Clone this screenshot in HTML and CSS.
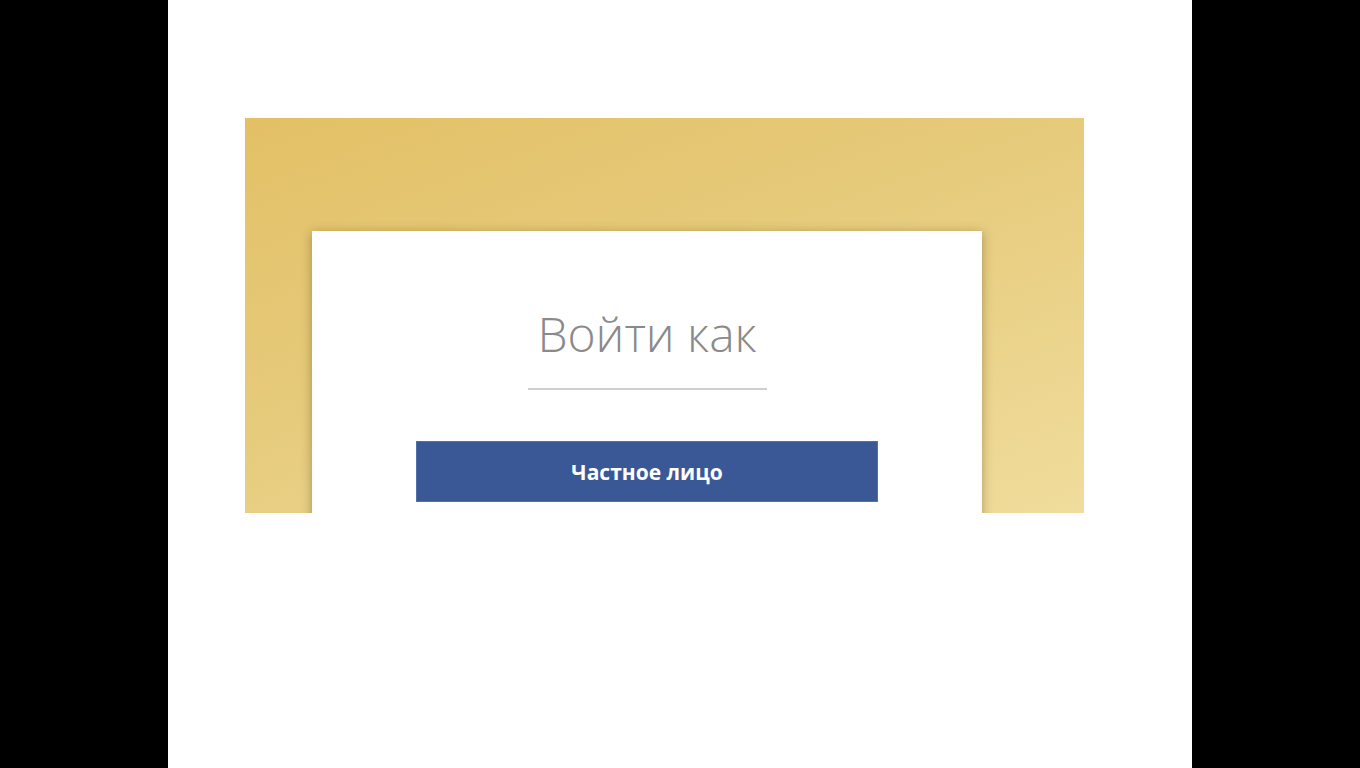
FILE: index.html
```html
<!DOCTYPE html>
<html lang="ru">
<head>
    <meta charset="UTF-8">
    <meta name="viewport" content="width=device-width, initial-scale=1.0">
    <title>Войти как</title>
    <link rel="stylesheet" href="styles.css">
</head>
<body>

    <div class="screen">
        <div class="banner">
            <div class="card">
                <h2 class="title">Войти как</h2>
                <div class="divider"></div>
                <button class="btn-login">Частное лицо</button>
            </div>
        </div>
    </div>

</body>
</html>
```

FILE: styles.css
```css
body {
    margin: 0;
    background: #000;
    font-family: "Open Sans", "Noto Sans", sans-serif;
}
.screen {
    width: 1024px;
    height: 768px;
    margin: 0 auto;
    background: #fff;
    padding-top: 118px;
    box-sizing: border-box;
}
.banner {
    width: 839px;
    height: 395px;
    margin-left: 77px;
    padding-top: 113px;
    box-sizing: border-box;
    overflow: hidden;
    background: linear-gradient(160deg, #e3c066 0%, #e6cb7c 45%, #f0dc9c 100%);
}
.card {
    width: 670px;
    height: 400px;
    margin-left: 67px;
    background: #fff;
    box-shadow: 0 2px 10px rgba(90, 70, 20, 0.45);
    padding-top: 79px;
    box-sizing: border-box;
    display: flex;
    flex-direction: column;
    align-items: center;
}
.title {
    margin: 0;
    font-size: 48px;
    font-weight: 300;
    color: #8a8a8a;
    line-height: 1;
}
.divider {
    width: 239px;
    height: 2px;
    background: #cfcfcf;
    margin-top: 30px;
}
.btn-login {
    width: 462px;
    height: 61px;
    margin-top: 51px;
    background: #3b5896;
    border: 1px solid #5470aa;
    color: #fff;
    font-family: "Open Sans", sans-serif;
    font-size: 21px;
    font-weight: bold;
}
```
